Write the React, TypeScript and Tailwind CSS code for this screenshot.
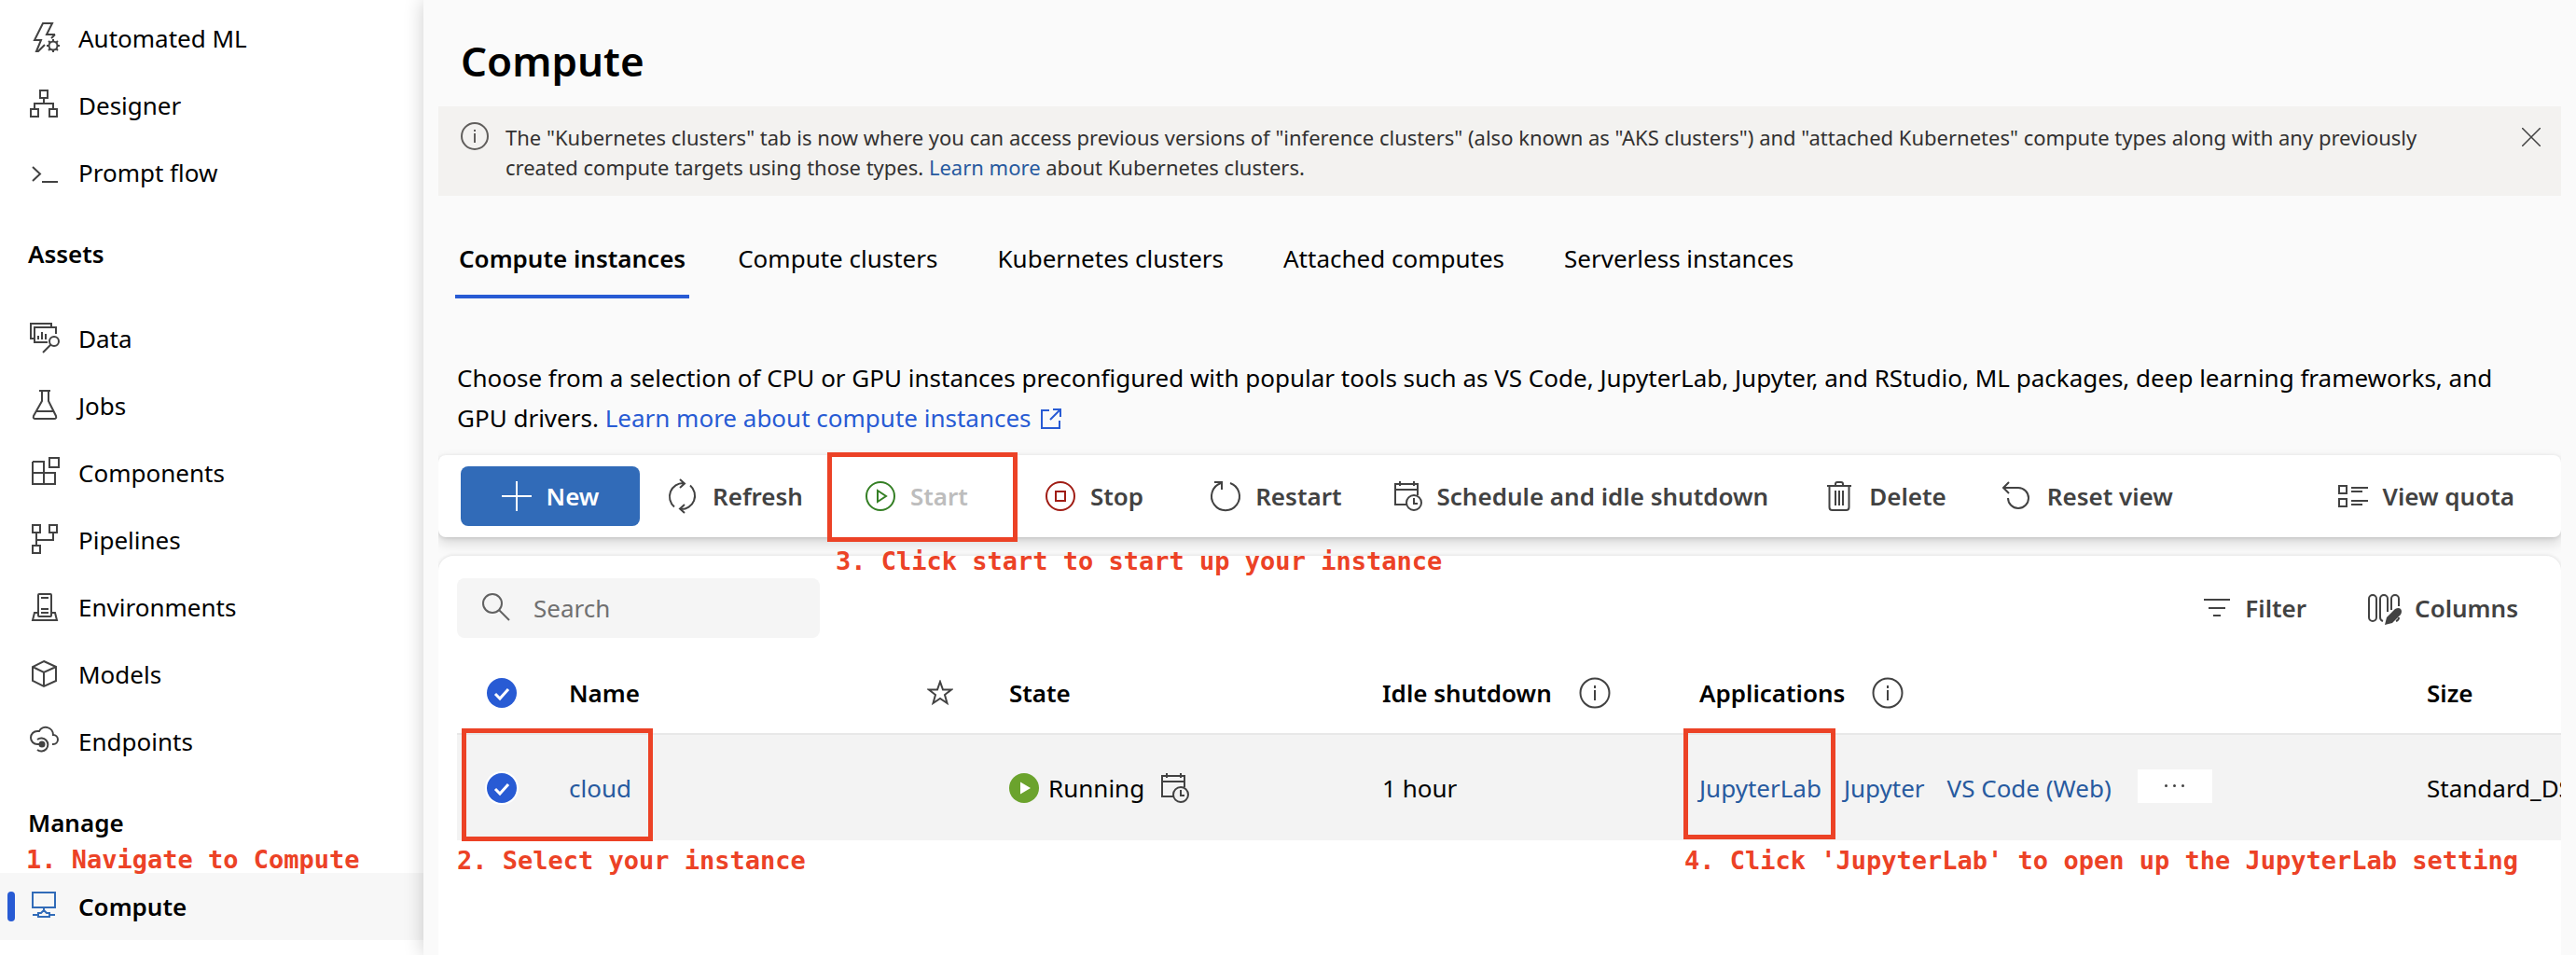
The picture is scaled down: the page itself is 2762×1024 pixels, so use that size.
import type { ReactNode } from "react";

type IconProps = { children: ReactNode; className?: string };

function Icon({ children, className = "" }: IconProps) {
  return (
    <svg
      viewBox="0 0 32 32"
      fill="none"
      stroke="currentColor"
      strokeWidth={2}
      aria-hidden="true"
      className={`size-8 shrink-0 overflow-visible ${className}`}
    >
      {children}
    </svg>
  );
}

const gearTeeth = [0, 45, 90, 135, 180, 225, 270, 315];

const icons = {
  automl: (
    <Icon>
      <path d="M27 12H18L24 0H14L5 18H12L7 30H9L16 23M27 12L23 16" />
      <circle cx="25" cy="24" r="4.5" />
      {gearTeeth.map((a) => (
        <path key={a} d="M25 19.5V17" transform={`rotate(${a} 25 24)`} />
      ))}
    </Icon>
  ),
  designer: (
    <Icon>
      <path d="M11 0h8v8h-8zM1 20h8v8H1zM21 20h8v8h-8zM15 8v6M5 20v-6h20v6" />
    </Icon>
  ),
  prompt: (
    <Icon>
      <path d="M3 10l8 7.500-8 7.500M13 26h17" />
    </Icon>
  ),
  data: (
    <Icon>
      <path d="M5 16H1V0h22v4M28 11V4H5v16h14M9 17v-4M13 17V9M17 17v-6" />
      <circle cx="26" cy="19" r="5" />
      <path d="M22.500 22.500L14 31" />
    </Icon>
  ),
  jobs: (
    <Icon>
      <path d="M10 0h12M13 0v11L4 27q-1 3 2 3h20q3 0 2-3L20 11V0M7 22h18" />
    </Icon>
  ),
  components: (
    <Icon>
      <path d="M3 4h12v24M3 4v24h24V16H3M21 0h10v10H21z" />
    </Icon>
  ),
  pipelines: (
    <Icon>
      <path d="M3 0h8v8H3zM21 0h8v8h-8zM3 22h8v8H3zM7 8v14M7 16h18V8" />
    </Icon>
  ),
  environments: (
    <Icon>
      <rect x="9" y="2" width="14" height="24" rx="1" />
      <path d="M12 6h8M12 18h8M12 22h8M8 22H5L3 30h26l-2-8h-3" />
    </Icon>
  ),
  models: (
    <Icon>
      <path d="M15 2l13 6v15l-13 6-12-6V8zM3 8l12 6 13-6M15 14v15" />
    </Icon>
  ),
  endpoints: (
    <Icon>
      <path d="M10 19H8A7 7 0 0 1 8 5h2A8 8 0 0 1 25 9a5 5 0 0 1 0 10h-1" />
      <path d="M8 14a7 7 0 1 1 0 11" />
      <circle cx="13" cy="19" r="3.500" fill="currentColor" stroke="none" />
    </Icon>
  ),
  compute: (
    <Icon className="text-[#316bb8]">
      <path d="M3 1h24v16H3zM15 17v4M3 25h6M21 25h6M9 27v-4h3l3-3 3 3h3v4z" />
    </Icon>
  ),
  calendar: (
    <Icon className="text-[#424242]">
      <path d="M16 25H3V3h24v12M3 9h24M8 0v5M23 0v5" />
      <circle cx="23" cy="23" r="8" />
      <path d="M23 18v6h4" />
    </Icon>
  ),
  info: (
    <Icon className="text-[#424242]">
      <circle cx="16" cy="16" r="15.500" />
      <path d="M16 13v11M16 8v3" />
    </Icon>
  ),
};

type NavEntry = { label: string; icon: ReactNode };

const authoring: NavEntry[] = [
  { label: "Automated ML", icon: icons.automl },
  { label: "Designer", icon: icons.designer },
  { label: "Prompt flow", icon: icons.prompt },
];

const assets: NavEntry[] = [
  { label: "Data", icon: icons.data },
  { label: "Jobs", icon: icons.jobs },
  { label: "Components", icon: icons.components },
  { label: "Pipelines", icon: icons.pipelines },
  { label: "Environments", icon: icons.environments },
  { label: "Models", icon: icons.models },
  { label: "Endpoints", icon: icons.endpoints },
];

function NavList({ items }: { items: NavEntry[] }) {
  return (
    <ul>
      {items.map((item) => (
        <li key={item.label}>
          <a href="#" className="flex h-[72px] items-center gap-5 pl-8">
            <span className="text-[#424242]">{item.icon}</span>
            {item.label}
          </a>
        </li>
      ))}
    </ul>
  );
}

function Note({ children, className }: { children: ReactNode; className: string }) {
  return (
    <span
      className={`pointer-events-none absolute z-10 text-left font-['DejaVu_Sans_Mono',monospace] text-[27px] leading-8 font-bold whitespace-nowrap text-[#ec4226] ${className}`}
    >
      {children}
    </span>
  );
}

function Frame({ className }: { className: string }) {
  return (
    <span
      className={`pointer-events-none absolute z-10 border-[5px] border-[#ec4226] ${className}`}
    />
  );
}

function Sidebar() {
  return (
    <nav aria-label="Workspace" className="w-[454px] shrink-0 bg-white pt-[5px]">
      <NavList items={authoring} />
      <h2 className="flex h-[106px] items-center pb-1 pl-[30px] font-semibold">Assets</h2>
      <NavList items={assets} />
      <div className="relative flex h-[105px] items-center pb-1 pl-[30px]">
        <h2 className="font-semibold">Manage</h2>
        <Note className="top-[75px] left-7">1. Navigate to Compute</Note>
      </div>
      <a
        href="#"
        aria-current="page"
        className="relative flex h-[72px] items-center gap-5 bg-[#f7f7f7] pl-8 font-semibold"
      >
        <span className="absolute left-2 h-8 w-2 rounded-full bg-[#285bd4]" />
        {icons.compute}
        Compute
      </a>
    </nav>
  );
}

function Banner() {
  return (
    <div
      role="status"
      className="flex items-start bg-[#f3f2f0] pt-[17px] pr-[22px] pb-[15px] pl-6 text-[22px] leading-8 text-[#323130]"
    >
      <svg
        viewBox="0 0 30 30"
        fill="none"
        stroke="#605e5c"
        strokeWidth={2}
        aria-hidden="true"
        className="mr-[18px] size-[30px] shrink-0"
      >
        <circle cx="15" cy="15" r="14" />
        <path d="M15 12v10M15 8v2" />
      </svg>
      <p className="min-w-0 flex-1 pr-10">
        The "Kubernetes clusters" tab is now where you can access previous versions of "inference
        clusters" (also known as "AKS clusters") and "attached Kubernetes" compute types along with
        any previously created compute targets using those types.{" "}
        <a href="#" className="text-[#275a9f]">
          Learn more
        </a>{" "}
        about Kubernetes clusters.
      </p>
      <button type="button" aria-label="Dismiss" className="mt-[6px]">
        <svg viewBox="0 0 20 20" stroke="#424242" strokeWidth={1.5} className="size-5">
          <path d="M0 0L20 20M20 0L0 20" />
        </svg>
      </button>
    </div>
  );
}

const tabs = ["Compute clusters", "Kubernetes clusters", "Attached computes", "Serverless instances"];

function Tabs() {
  return (
    <div role="tablist" className="mt-6 flex h-[86px] gap-14 pl-[18px]">
      <button
        type="button"
        role="tab"
        aria-selected="true"
        className="relative -mr-2 px-1 font-semibold"
      >
        Compute instances
        <span className="absolute inset-x-0 bottom-0 h-1 bg-[#285bd4]" />
      </button>
      {tabs.map((tab) => (
        <button key={tab} type="button" role="tab" aria-selected="false" className="px-1">
          {tab}
        </button>
      ))}
    </div>
  );
}

const toolButton = "flex items-center gap-4 whitespace-nowrap";

function Toolbar() {
  return (
    <div
      role="toolbar"
      aria-label="Instance actions"
      className="mt-[18px] flex h-[88px] rounded-lg bg-white pr-[50px] pl-6 font-semibold text-[#424242] shadow-[0_6px_14px_rgba(0,0,0,0.15),0_1px_4px_rgba(0,0,0,0.12)]"
    >
      <button
        type="button"
        className="flex h-16 w-48 items-center justify-center gap-4 self-center rounded-lg bg-[#316bb8] text-white"
      >
        <Icon>
          <path d="M16 0v32M0 16h32" />
        </Icon>
        New
      </button>
      <button type="button" className={`${toolButton} ml-[30px]`}>
        <Icon>
          <path d="M7 27.500A14.500 14.500 0 0 1 17 2M24 4.500A14.500 14.500 0 0 1 14 30M13-2l5 4.500-5 4.500M18 25l-5 4.500 5 4.500" />
        </Icon>
        Refresh
      </button>
      <div className="relative ml-[26px] flex w-[204px] pl-[41px]">
        <button type="button" disabled className={`${toolButton} text-[#bdbdbd]`}>
          <Icon className="text-[#347f24]">
            <circle cx="16" cy="16" r="15" />
            <path d="M13 10v12l9-6z" />
          </Icon>
          Start
        </button>
        <Frame className="inset-x-0 -top-[3px] -bottom-[5px]" />
        <Note className="top-[98px] left-[9px]">3. Click start to start up your instance</Note>
      </div>
      <button type="button" className={`${toolButton} ml-[30px]`}>
        <Icon className="text-[#a01c14]">
          <circle cx="16" cy="16" r="15" />
          <path d="M11 11h10v10H11z" />
        </Icon>
        Stop
      </button>
      <button type="button" className={`${toolButton} ml-[72px]`}>
        <Icon>
          <path d="M11 2A15 15 0 1 0 21 2M4 1h8v8" />
        </Icon>
        Restart
      </button>
      <button type="button" className={`${toolButton} ml-[54px]`}>
        {icons.calendar}
        Schedule and idle shutdown
      </button>
      <button type="button" className={`${toolButton} ml-[60px]`}>
        <Icon>
          <path d="M3 5h26M12 5V3q0-2 2-2h4q2 0 2 2v2M5.500 5v23q0 3 3 3h15q3 0 3-3V5M12 10v16M16 10v16M20 10v16" />
        </Icon>
        Delete
      </button>
      <button type="button" className={`${toolButton} ml-[60px]`}>
        <Icon>
          <path d="M1 7h16a11 11 0 1 1-11 11M7 1L1 7l6 6" />
        </Icon>
        Reset view
      </button>
      <button type="button" className={`${toolButton} ml-auto`}>
        <Icon>
          <path d="M1 5h8v8H1zM1 19h8v8H1zM14 7h18M14 11h12M14 21h18M14 25h12" />
        </Icon>
        View quota
      </button>
    </div>
  );
}

function RoundCheck({ label, ringed = false }: { label: string; ringed?: boolean }) {
  return (
    <span className="ml-8 grid size-8 place-items-center">
      <input
        type="checkbox"
        defaultChecked
        aria-label={label}
        className={
          ringed
            ? "col-start-1 row-start-1 size-8 appearance-none rounded-full bg-[#285bd4] ring-2 ring-white"
            : "col-start-1 row-start-1 size-8 appearance-none rounded-full bg-[#285bd4]"
        }
      />
      <svg
        viewBox="0 0 32 32"
        fill="none"
        stroke="white"
        strokeWidth={3}
        className="pointer-events-none col-start-1 row-start-1 size-8"
      >
        <path d="M9 17l5 5 9-10" />
      </svg>
    </span>
  );
}

function InstanceTable() {
  return (
    <table className="mt-4 w-full table-fixed border-separate border-spacing-0 text-left">
      <colgroup>
        <col className="w-[120px]" />
        <col className="w-[384px]" />
        <col className="w-[88px]" />
        <col className="w-[400px]" />
        <col className="w-[340px]" />
        <col className="w-[780px]" />
        <col />
      </colgroup>
      <thead>
        <tr className="h-[88px] [&>th]:border-b-2 [&>th]:border-[#e8e8e8] [&>th]:p-0 [&>th]:font-semibold">
          <th scope="col">
            <RoundCheck label="Select all instances" />
          </th>
          <th scope="col">Name</th>
          <th scope="col" aria-label="Favorite">
            <svg
              viewBox="0 0 28 28"
              fill="none"
              stroke="#424242"
              strokeWidth={2}
              className="size-7"
            >
              <path d="M14 2l3 8.500h9l-7 5.500 2.500 9L14 20l-7.500 5L9 16l-7-5.500h9z" />
            </svg>
          </th>
          <th scope="col">State</th>
          <th scope="col">
            <span className="flex items-center gap-[30px]">
              Idle shutdown
              {icons.info}
            </span>
          </th>
          <th scope="col">
            <span className="flex items-center gap-[30px]">
              Applications
              {icons.info}
            </span>
          </th>
          <th scope="col">Size</th>
        </tr>
      </thead>
      <tbody>
        <tr className="h-[113px] bg-[#f3f3f3] [&>td]:relative [&>td]:p-0">
          <td>
            <RoundCheck label="Select cloud" ringed />
            <Frame className="-top-[7px] -bottom-px left-[5px] w-[205px]" />
            <Note className="top-[119px] left-0">2. Select your instance</Note>
          </td>
          <td>
            <a href="#" className="text-[#275a9f]">
              cloud
            </a>
          </td>
          <td />
          <td>
            <span className="flex items-center">
              <svg viewBox="0 0 32 32" aria-hidden="true" className="mr-[10px] size-8">
                <circle cx="16" cy="16" r="16" fill="#6ba32d" />
                <path d="M12 9.500v13L23 16z" fill="white" />
              </svg>
              <span className="mr-4">Running</span>
              {icons.calendar}
            </span>
          </td>
          <td>1 hour</td>
          <td>
            <span className="flex items-center gap-6 text-[#275a9f]">
              <a href="#">JupyterLab</a>
              <a href="#">Jupyter</a>
              <a href="#">VS Code (Web)</a>
              <button
                type="button"
                aria-label="More applications"
                className="mb-1 ml-1 flex h-9 w-20 items-center justify-center gap-[6px] bg-white"
              >
                <span className="size-[3px] rounded-full bg-[#424242]" />
                <span className="size-[3px] rounded-full bg-[#424242]" />
                <span className="size-[3px] rounded-full bg-[#424242]" />
              </button>
            </span>
            <Frame className="-top-[7px] bottom-px -left-[17px] w-[163px]" />
            <Note className="top-[119px] -left-4">
              4. Click 'JupyterLab' to open up the JupyterLab setting
            </Note>
          </td>
          <td className="overflow-hidden whitespace-nowrap">Standard_DS11_v2</td>
        </tr>
      </tbody>
    </table>
  );
}

function InstancePanel() {
  return (
    <section className="mt-5 flex-1 rounded-t-2xl bg-white pt-6 pl-5 shadow-[0_0_4px_rgba(0,0,0,0.14)]">
      <div className="flex h-16 items-center pr-[46px] font-semibold text-[#424242]">
        <label className="flex h-16 w-[389px] items-center gap-[22px] rounded-lg bg-[#f5f5f5] pl-7">
          <Icon className="text-[#616161]">
            <circle cx="10" cy="11" r="10" />
            <path d="M17 18l11 11" />
          </Icon>
          <input
            type="text"
            placeholder="Search"
            aria-label="Search"
            className="w-64 bg-transparent font-normal outline-none placeholder:text-[#707070]"
          />
        </label>
        <button type="button" className="mr-[66px] ml-auto flex items-center gap-[14px]">
          <Icon>
            <path d="M2 7h28M7 16h18M12 24h8" />
          </Icon>
          Filter
        </button>
        <button type="button" className="flex items-center gap-[14px]">
          <svg
            viewBox="0 0 36 36"
            fill="none"
            stroke="currentColor"
            strokeWidth={2}
            aria-hidden="true"
            className="size-9"
          >
            <rect x="1" y="4" width="8" height="28" rx="4" />
            <path d="M21 22V8a4 4 0 0 0-8 0v20q0 3 3 4M33 16V8a4 4 0 0 0-8 0v12M30 32q3-1 3-4" />
            <path
              d="M18 36l2-8 9-9q4-2 6 0t0 6l-9 9z"
              fill="currentColor"
              stroke="none"
            />
          </svg>
          Columns
        </button>
      </div>
      <InstanceTable />
    </section>
  );
}

export default function App() {
  return (
    <div className="flex min-h-screen bg-white font-['Noto_Sans',sans-serif] text-[26px] leading-9 text-black">
      <Sidebar />
      <main className="relative flex min-w-0 flex-1 flex-col bg-[#fafafa] pr-4 pl-4 shadow-[0_0_20px_rgba(0,0,0,0.2)]">
        <h1 className="flex h-[114px] items-center pt-4 pl-6 text-[44px] leading-[60px] font-semibold">
          Compute
        </h1>
        <div className="flex flex-1 flex-col overflow-x-clip">
          <Banner />
          <Tabs />
          <p className="mt-16 pr-9 pl-5 leading-[43px]">
            Choose from a selection of CPU or GPU instances preconfigured with popular tools such as
            VS Code, JupyterLab, Jupyter, and RStudio, ML packages, deep learning frameworks, and
            GPU drivers.{" "}
            <a href="#" className="text-[#285bd4]">
              Learn more about compute instances
              <svg
                viewBox="0 0 22 22"
                fill="none"
                stroke="currentColor"
                strokeWidth={2}
                aria-hidden="true"
                className="ml-[10px] inline size-[22px] align-[-2px]"
              >
                <path d="M9 2H1v19h19v-8M13 1h8v8M21 1L10 12" />
              </svg>
            </a>
          </p>
          <Toolbar />
          <InstancePanel />
        </div>
      </main>
    </div>
  );
}
